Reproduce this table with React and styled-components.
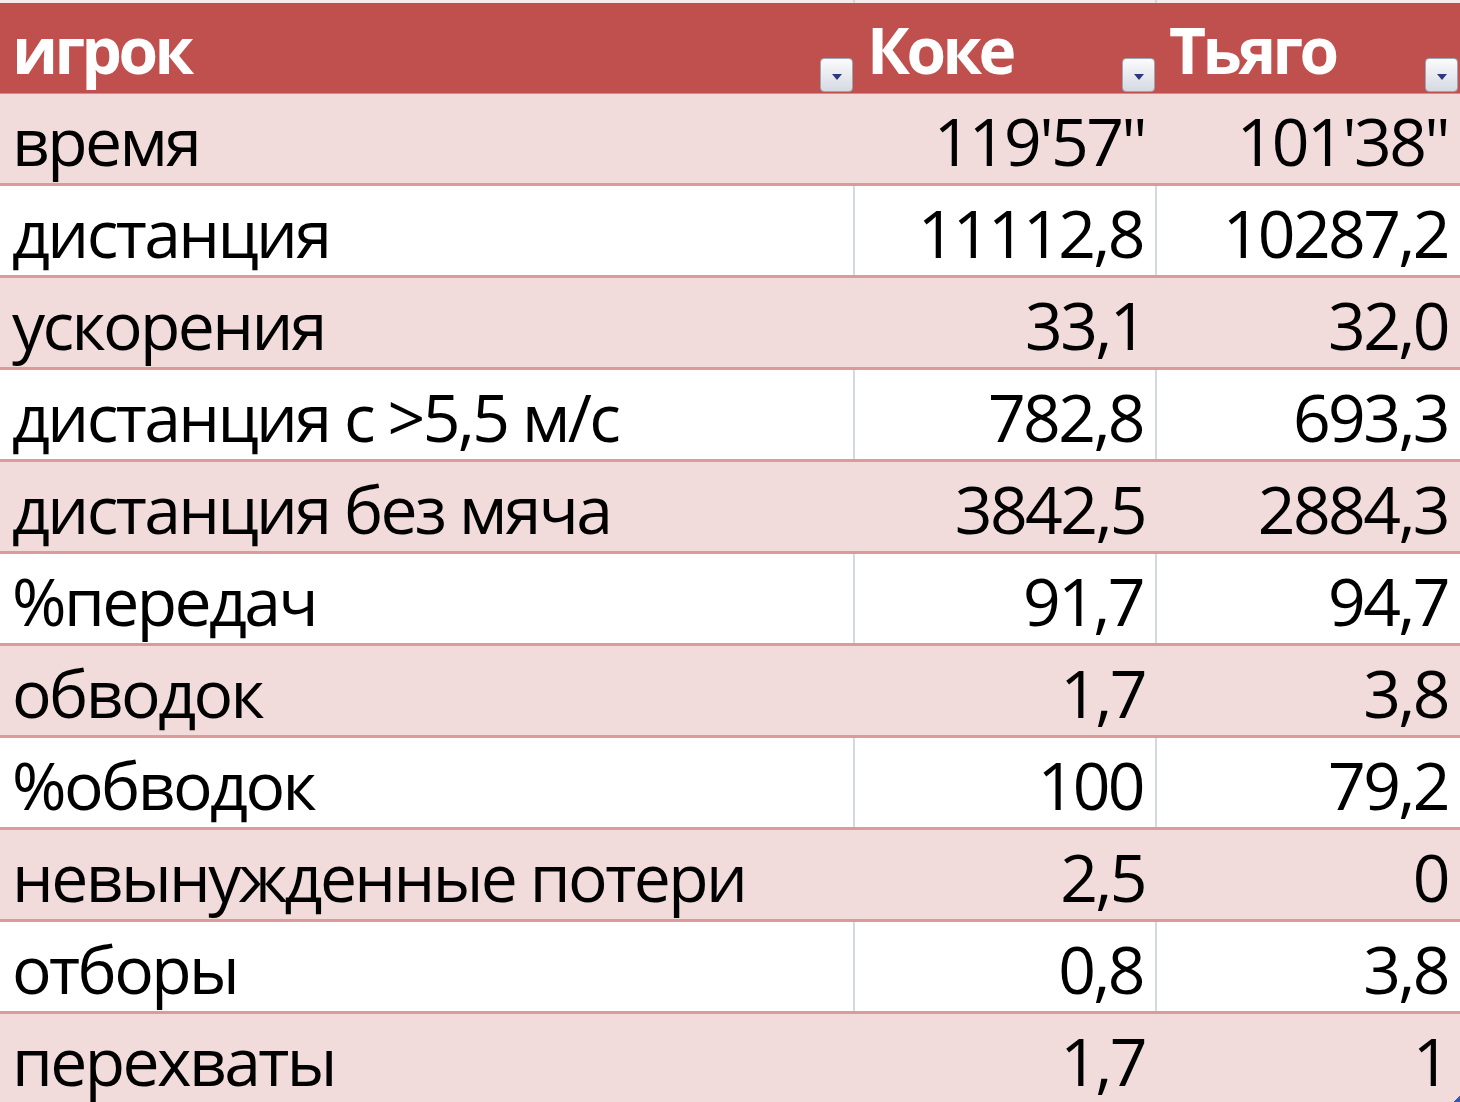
import React from 'react';
import styled, { createGlobalStyle } from 'styled-components';

const rows = [
  ['время', "119'57\"", "101'38\""],
  ['дистанция', '11112,8', '10287,2'],
  ['ускорения', '33,1', '32,0'],
  ['дистанция с >5,5 м/с', '782,8', '693,3'],
  ['дистанция без мяча', '3842,5', '2884,3'],
  ['%передач', '91,7', '94,7'],
  ['обводок', '1,7', '3,8'],
  ['%обводок', '100', '79,2'],
  ['невынужденные потери', '2,5', '0'],
  ['отборы', '0,8', '3,8'],
  ['перехваты', '1,7', '1'],
];

const headers = ['игрок', 'Коке', 'Тьяго'];

const App = () => (
  <>
    <GlobalStyle />
    <Sheet>
      <TopStrip>
        <GridGap />
        <GridGap />
        <GridGap $last />
      </TopStrip>
      <HeaderRow>
        {headers.map((h) => (
          <HeaderCell key={h}>
            <HeaderText>{h}</HeaderText>
            <FilterButton>
              <svg width="10" height="6" viewBox="0 0 10 6">
                <path d="M0 0 H10 L5 6 Z" fill="#2b3a7e" />
              </svg>
            </FilterButton>
          </HeaderCell>
        ))}
      </HeaderRow>
      {rows.map((r, i) => (
        <Row key={r[0]} $band={i % 2 === 0}>
          <Cell $band={i % 2 === 0}>{r[0]}</Cell>
          <Cell $band={i % 2 === 0} $num>{r[1]}</Cell>
          <Cell $band={i % 2 === 0} $num $last>
            {r[2]}
            {i === rows.length - 1 && <ResizeHandle />}
          </Cell>
        </Row>
      ))}
    </Sheet>
  </>
);

export default App;

const GlobalStyle = createGlobalStyle`
  html, body {
    margin: 0;
    padding: 0;
    background: #ffffff;
    overflow: hidden;
  }
`;

const Sheet = styled.div`
  width: 1460px;
  height: 1102px;
  overflow: hidden;
  background: #ffffff;
  font-family: "Open Sans", "Noto Sans", sans-serif;
  color: #000;
`;

const columns = '855px 302px 303px';

const TopStrip = styled.div`
  display: grid;
  grid-template-columns: ${columns};
  height: 3px;
  background: #f7eaea;
`;

const GridGap = styled.div`
  border-right: ${(p) => (p.$last ? 'none' : '2px solid #d3d9e3')};
`;

const HeaderRow = styled.div`
  display: grid;
  grid-template-columns: ${columns};
  height: 91px;
  background: #c0504d;
  border-bottom: 1px solid #d98a88;
  box-sizing: border-box;
`;

const HeaderCell = styled.div`
  display: flex;
  align-items: flex-start;
  padding: 15px 2px 1px 12px;
  box-sizing: border-box;
  min-width: 0;
`;

const HeaderText = styled.span`
  font-size: 64px;
  font-weight: 700;
  line-height: 1;
  color: #ffffff;
  letter-spacing: -3.6px;
  white-space: nowrap;
`;

const FilterButton = styled.span`
  margin-left: auto;
  align-self: flex-end;
  width: 33px;
  height: 34px;
  box-sizing: border-box;
  border: 1px solid #9ea6b3;
  border-radius: 4px;
  background: linear-gradient(#fbfbfc, #e6e9ee 55%, #d5dae2);
  display: flex;
  align-items: center;
  justify-content: center;
  padding-top: 4px;
  flex-shrink: 0;
`;

const Row = styled.div`
  display: grid;
  grid-template-columns: ${columns};
  height: 92px;
  box-sizing: border-box;
  background: ${(p) => (p.$band ? '#f2dcdb' : '#ffffff')};
  border-bottom: 3px solid #dc9a98;
`;

const Cell = styled.div`
  position: relative;
  display: flex;
  align-items: flex-start;
  justify-content: ${(p) => (p.$num ? 'flex-end' : 'flex-start')};
  padding: ${(p) => (p.$num ? '13px 12px 0 0' : '13px 0 0 12px')};
  font-size: 66px;
  line-height: 1;
  letter-spacing: -2.6px;
  white-space: nowrap;
  box-sizing: border-box;
  border-right: ${(p) => (p.$band || p.$last ? 'none' : '2px solid #d3d9e3')};
`;

const ResizeHandle = styled.span`
  position: absolute;
  right: 0;
  bottom: -3px;
  width: 10px;
  height: 10px;
  background: linear-gradient(135deg, transparent 45%, #3b55b3 46%);
`;
